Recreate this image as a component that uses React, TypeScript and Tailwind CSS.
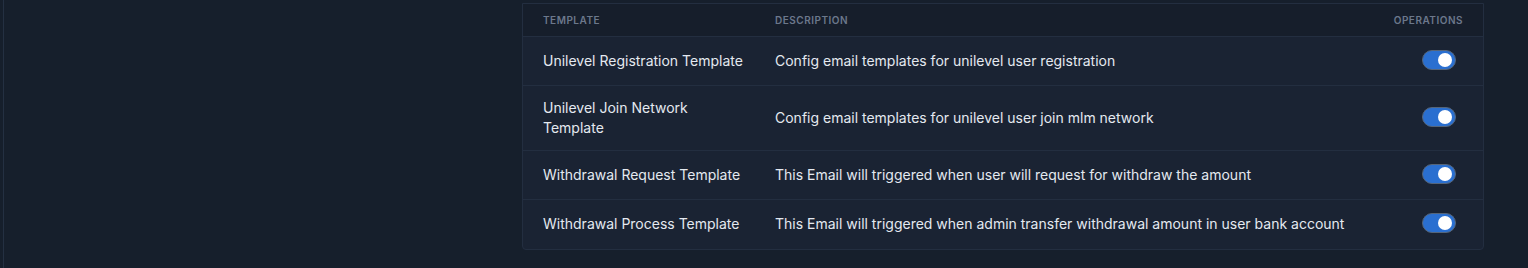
import React, { useState } from "react"

const rows = [
  {
    name: "Unilevel Registration Template",
    desc: "Config email templates for unilevel user registration"
  },
  {
    name: "Unilevel Join Network Template",
    desc: "Config email templates for unilevel user join mlm network"
  },
  {
    name: "Withdrawal Request Template",
    desc: "This Email will triggered when user will request for withdraw the amount"
  },
  {
    name: "Withdrawal Process Template",
    desc: "This Email will triggered when admin transfer withdrawal amount in user bank account"
  }
]

const Toggle = ({ on, onClick }: { on: boolean; onClick: () => void }) => (
  <button
    onClick={onClick}
    className={`relative h-[20px] w-[34px] rounded-full border border-[#55657a] ${
      on ? "bg-[#2a6fd0]" : "bg-[#2b3648]"
    }`}>
    <span
      className={`absolute top-[2px] h-[14px] w-[14px] rounded-full bg-white ${
        on ? "right-[3px]" : "left-[3px]"
      }`}
    />
  </button>
)

const App = () => {
  const [enabled, setEnabled] = useState([true, true, true, true])

  const toggle = (i: number) => {
    setEnabled((prev) => prev.map((v, j) => (j === i ? !v : v)))
  }

  return (
    <div
      className="flex h-[268px] w-full bg-[#161f2c] text-[#e4e9f0]"
      style={{ fontFamily: "Inter, 'Noto Sans', sans-serif" }}>
      <div className="w-[522px] pl-[3px]">
        <div className="h-full border-l border-[#243042]" />
      </div>

      <div className="mt-[3px] h-[247px] w-[962px] overflow-hidden rounded-b-[4px] border border-[#232e40] bg-[#1a2333]">
        <div className="flex h-[33px] items-center border-b border-[#232e40] bg-[#161e2b] text-[10px] font-semibold uppercase tracking-[0.05em] text-[#6c788b]">
          <div className="w-[252px] pl-[20px]">Template</div>
          <div className="flex-1">Description</div>
          <div className="pr-[20px]">Operations</div>
        </div>

        {rows.map((row, i) => (
          <div
            key={row.name}
            className={`flex items-center py-3 text-[14px] leading-[20px] ${
              i < rows.length - 1 ? "border-b border-[#232e40]" : ""
            }`}>
            <div className="w-[252px] pl-[20px] pr-[29px]">{row.name}</div>
            <div className="flex-1">{row.desc}</div>
            <div className="flex h-[24px] items-start pt-[1px] pr-[27px]">
              <Toggle on={enabled[i]} onClick={() => toggle(i)} />
            </div>
          </div>
        ))}
      </div>
    </div>
  )
}

export default App
